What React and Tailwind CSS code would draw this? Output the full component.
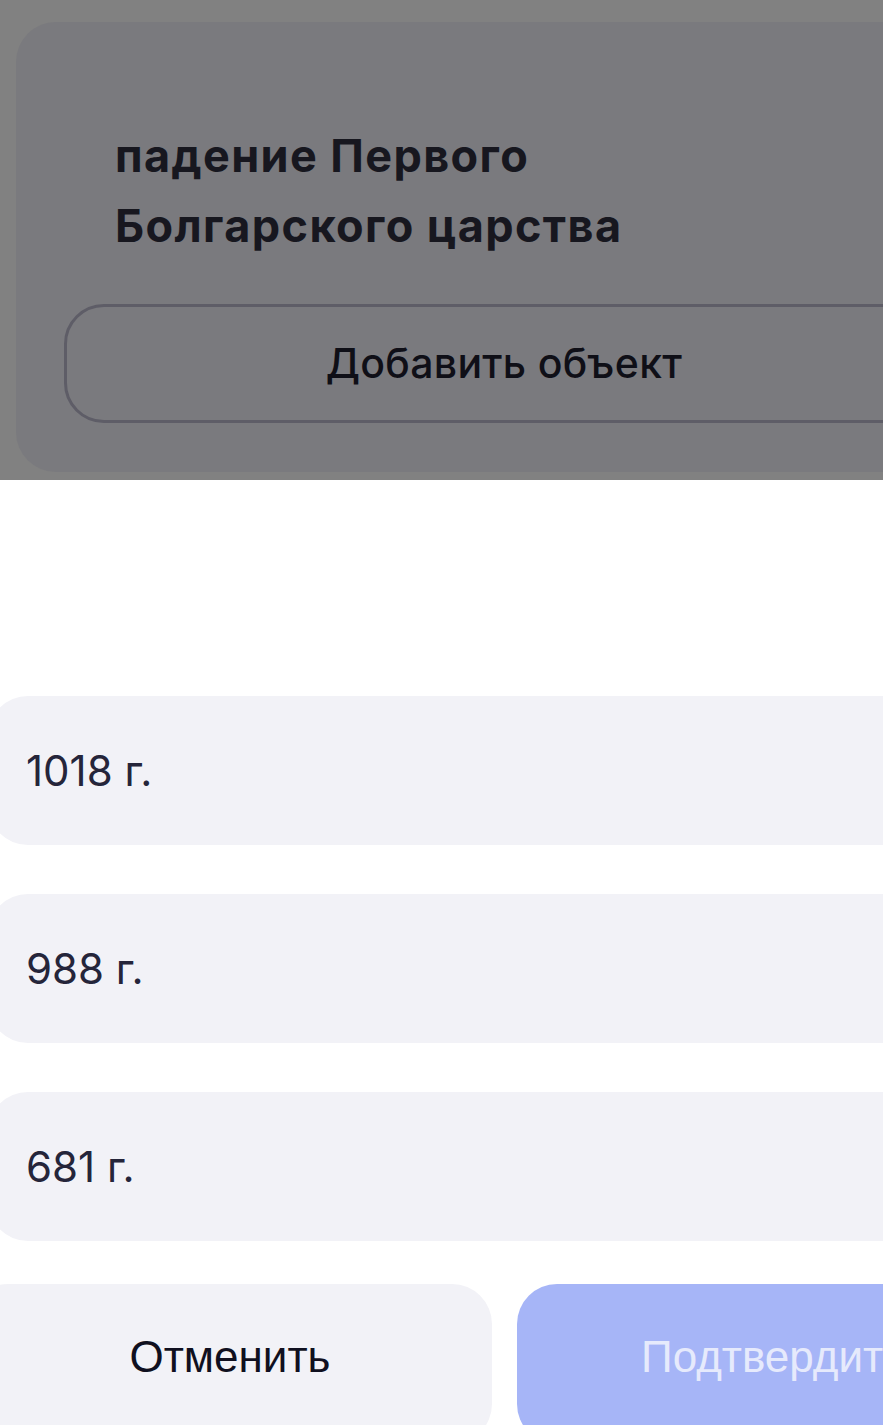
import React from "react";

export default function App() {
  const options = ["1018 г.", "988 г.", "681 г."];
  return (
    <div
      className="relative w-[883px] h-[1425px] overflow-hidden bg-white"
      style={{ fontFamily: "Inter, 'Noto Sans', sans-serif" }}
    >
      {/* dimmed background */}
      <div className="h-[480px] bg-[#818181] pt-[22px] pl-[16px] overflow-hidden">
        <div className="w-[1000px] h-[450px] rounded-[40px] bg-[#7a7a7e] pl-[48px] pt-[99px]">
          <div className="pl-[51px] text-[45px] leading-[70px] font-bold text-[#17171f] tracking-[1.4px]">
            <div>падение Первого</div>
            <div>Болгарского царства</div>
          </div>
          <div className="mt-[43px] w-[880px] h-[119px] rounded-[40px] border-[3px] border-[#5e5d67] flex items-center justify-center text-[41px] font-medium text-[#0f0f17] tracking-[0.3px]">
            Добавить объект
          </div>
        </div>
      </div>

      {/* sheet */}
      <div className="pt-[216px] flex flex-col gap-[49px]">
        {options.map((o) => (
          <div
            key={o}
            className="ml-[-12px] w-[1000px] h-[149px] rounded-[40px] bg-[#f2f2f7] flex items-center pl-[38px] text-[42px] text-[#25253a]"
          >
            {o}
          </div>
        ))}
      </div>
      <div
        className="mt-[43px] ml-[-32px] flex gap-[25px]"
        style={{ fontFamily: "'Liberation Sans', Arial, sans-serif" }}
      >
        <div className="shrink-0 w-[524px] h-[160px] rounded-[40px] bg-[#f2f2f7] flex items-start pt-[40px] justify-center text-[44px] text-[#101020]">
          Отменить
        </div>
        <div className="shrink-0 w-[524px] h-[160px] rounded-[40px] bg-[#a6b5f7] flex items-start pt-[40px] pl-[124px] text-[44px] text-[#e6eafc] whitespace-nowrap">
          Подтвердить
        </div>
      </div>
    </div>
  );
}
